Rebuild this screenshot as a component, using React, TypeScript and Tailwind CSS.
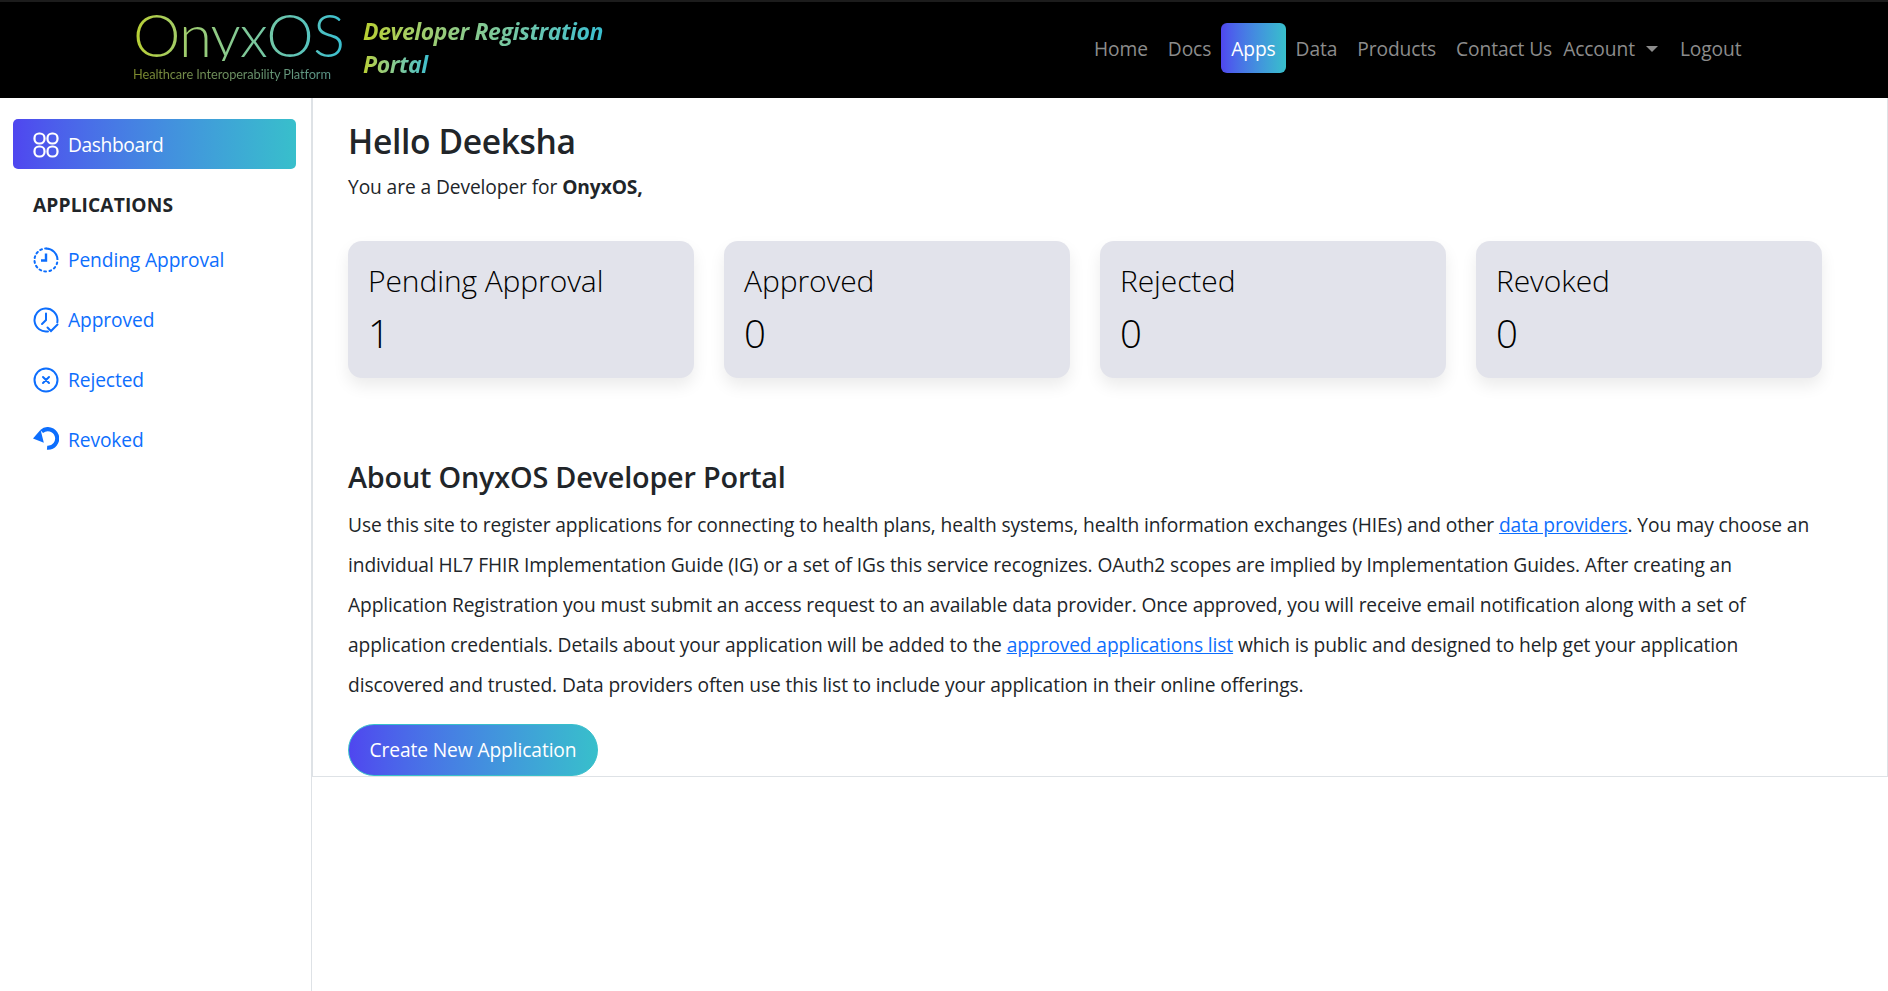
const gradient = "bg-gradient-to-r from-[#4f46ef] to-[#38bfcb]";
const textGradient =
  "bg-gradient-to-r from-[#b9cf2e] to-[#38bfd0] bg-clip-text text-transparent";

const DashboardIcon = () => (
  <svg width="26" height="26" viewBox="0 0 26 26" fill="none" stroke="currentColor" strokeWidth="2.2">
    <rect x="1.5" y="1.5" width="10" height="10" rx="4.5" />
    <rect x="14.5" y="1.5" width="10" height="10" rx="4.5" />
    <rect x="1.5" y="14.5" width="10" height="10" rx="4.5" />
    <rect x="14.5" y="14.5" width="10" height="10" rx="4.5" />
  </svg>
);

const PendingIcon = () => (
  <svg width="26" height="26" viewBox="0 0 26 26" fill="none" stroke="currentColor" strokeWidth="2">
    <path d="M13 1.5a11.5 11.5 0 0 1 11.5 11.5" />
    <path d="M13 24.5a11.5 11.5 0 0 1 0-23" strokeDasharray="1.8 3.2" strokeLinecap="round" />
    <path d="M24.2 15.5a11.5 11.5 0 0 1-9 8.8" strokeDasharray="1.8 3.2" strokeLinecap="round" />
    <path d="M13 6.5v7H8" strokeWidth="2.4" />
  </svg>
);

const ApprovedIcon = () => (
  <svg width="26" height="26" viewBox="0 0 26 26" fill="none" stroke="currentColor" strokeWidth="2">
    <path d="M15 24.4A11.5 11.5 0 1 1 24.5 13c0 .8-.1 1.6-.2 2.3" strokeLinecap="round" />
    <path d="M13 6.5V13l-4 4" strokeLinecap="round" />
    <path d="M14.5 20.5l3.5 3.5 6.5-6.5" strokeLinecap="round" />
  </svg>
);

const RejectedIcon = () => (
  <svg width="26" height="26" viewBox="0 0 26 26" fill="none" stroke="currentColor" strokeWidth="2">
    <circle cx="13" cy="13" r="11.5" />
    <path d="M10 10l6 6M16 10l-6 6" strokeLinecap="round" />
  </svg>
);

const RevokedIcon = () => (
  <svg className="mb-[3px]" width="26" height="23" viewBox="0 0 24 21" fill="none">
    <path d="M8 4A8.6 8.6 0 1 1 13 19" stroke="currentColor" strokeWidth="3.8" />
    <path d="M0 10.5 7 2.5 10 14.5Z" fill="currentColor" />
  </svg>
);

const sideItems = [
  { label: "Pending Approval", icon: <PendingIcon /> },
  { label: "Approved", icon: <ApprovedIcon /> },
  { label: "Rejected", icon: <RejectedIcon /> },
  { label: "Revoked", icon: <RevokedIcon /> },
];

const cards = [
  { label: "Pending Approval", count: 1 },
  { label: "Approved", count: 0 },
  { label: "Rejected", count: 0 },
  { label: "Revoked", count: 0 },
];

const navLinks = ["Home", "Docs", "Apps", "Data", "Products", "Contact Us"];

const Navbar = () => (
  <nav className="flex h-[98px] items-center border-t-2 border-[#1c1c1c] bg-black">
    <div className="mb-[12px] ml-[133px] flex w-[207px] flex-col items-start">
      <span
        className={`font-['Lato'] text-[60px] leading-[54px] font-light tracking-[-0.8px] ${textGradient}`}
      >
        OnyxOS
      </span>
      <span className="mt-[6px] h-[14px] bg-gradient-to-r from-[#7d8a2a] to-[#5c9a8e] bg-clip-text font-['Lato'] text-[12.8px] leading-[14px] whitespace-nowrap text-transparent">
        Healthcare Interoperability Platform
      </span>
    </div>
    <div className="mb-[4px] ml-[23px] w-[260px] font-['Open_Sans'] text-[23px] leading-[33px] font-bold tracking-[-0.4px] whitespace-nowrap italic">
      <span className={textGradient}>Developer Registration</span>
      <br />
      <span className={`${textGradient} pr-[2px]`}>Portal</span>
    </div>
    <ul className="mb-[4px] ml-[461px] flex items-center font-['Open_Sans'] text-[19.2px] text-[#8c8c8c]">
      {navLinks.map((link) => (
        <li key={link}>
          <a
            href="#"
            className={
              link === "Apps"
                ? `flex h-[50px] items-center rounded-[6px] px-[10px] pt-[2px] text-white ${gradient}`
                : "flex h-[50px] items-center px-[10px] pt-[2px]"
            }
          >
            {link}
          </a>
        </li>
      ))}
      <li className="ml-[1px] flex h-[50px] items-center pt-[2px] pr-[12px]">
        Account
        <span className="ml-[11px] h-0 w-0 border-x-[6px] border-t-[6px] border-x-transparent border-t-[#8c8c8c]" />
      </li>
      <li className="flex h-[50px] items-center px-[10px] pt-[2px]">Logout</li>
    </ul>
  </nav>
);

const Sidebar = () => (
  <aside className="min-h-[893px] w-[312px] shrink-0 border-r border-[#dee2e6] pt-[21px]">
    <a
      href="#"
      className={`mx-[13px] flex h-[50px] w-[283px] items-center gap-[9px] rounded-[5px] pt-[2px] pl-[20px] tracking-[-0.4px] text-white ${gradient}`}
    >
      <DashboardIcon />
      Dashboard
    </a>
    <h6 className="mt-[22px] pl-[33px] text-[19.2px] leading-[28px] font-bold tracking-[0.1px] text-[#212529]">
      APPLICATIONS
    </h6>
    <ul className="mt-[11px] flex flex-col">
      {sideItems.map((item) => (
        <li key={item.label} className="flex h-[60px] items-center gap-[9px] pl-[33px] text-[#0d6efd]">
          <span className="flex w-[26px] justify-center">{item.icon}</span>
          {item.label}
        </li>
      ))}
    </ul>
  </aside>
);

const MainPanel = () => (
  <main className="h-[679px] flex-1 border-r border-b border-l border-[#dee2e6] pl-[35px]">
    <h2 className="pt-[23px] text-[33.6px] leading-[40px] font-semibold tracking-[-0.35px] text-[#212529]">
      Hello Deeksha
    </h2>
    <p className="mt-[12px] leading-[28px] text-[#212529]">
      You are a Developer for <strong>OnyxOS,</strong>
    </p>
    <div className="mt-[40px] flex gap-[30px]">
      {cards.map((card) => (
        <div
          key={card.label}
          className="h-[137px] w-[346px] rounded-[14px] bg-[#e2e3eb] px-[20px] pt-[20px] shadow-[0_8px_16px_rgba(0,0,0,0.08)]"
        >
          <div className="text-[30px] leading-[39px] font-light text-black">{card.label}</div>
          <div className="mt-[10px] text-[38.4px] leading-[46px] font-light text-black">{card.count}</div>
        </div>
      ))}
    </div>
    <h3 className="mt-[80px] text-[28.8px] leading-[38px] font-semibold tracking-[-0.2px] text-[#212529]">
      About OnyxOS Developer Portal
    </h3>
    <p className="mt-[9px] leading-[40px] whitespace-nowrap text-[#212529]">
      Use this site to register applications for connecting to health plans, health systems, health information exchanges (HIEs) and other{" "}
      <a href="#" className="text-[#0d6efd] underline">data providers</a>. You may choose an
      <br />
      individual HL7 FHIR Implementation Guide (IG) or a set of IGs this service recognizes. OAuth2 scopes are implied by Implementation Guides. After creating an
      <br />
      Application Registration you must submit an access request to an available data provider. Once approved, you will receive email notification along with a set of
      <br />
      application credentials. Details about your application will be added to the{" "}
      <a href="#" className="text-[#0d6efd] underline">approved applications list</a> which is public and designed to help get your application
      <br />
      discovered and trusted. Data providers often use this list to include your application in their online offerings.
    </p>
    <button className={`mt-[19px] h-[52px] w-[250px] rounded-full border border-[#38bfcb] pt-[1px] text-white ${gradient}`}>
      Create New Application
    </button>
  </main>
);

export default function App() {
  return (
    <div className="min-h-[991px] bg-white font-['Open_Sans',sans-serif] text-[19.2px] tracking-[-0.1px]">
      <Navbar />
      <div className="flex">
        <Sidebar />
        <MainPanel />
      </div>
    </div>
  );
}
